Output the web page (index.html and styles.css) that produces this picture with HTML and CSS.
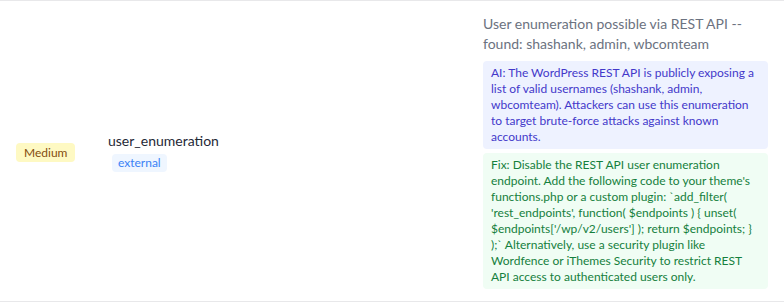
FILE: index.html
```html
<!DOCTYPE html>
<html lang="en">
<head>
<meta charset="utf-8">
<title>Finding</title>
<link rel="stylesheet" href="styles.css">
</head>
<body>
<div class="row">
  <div class="cell cell-severity">
    <span class="badge badge-medium">Medium</span>
  </div>
  <div class="cell cell-check">
    <div class="check-name">user_enumeration</div>
    <span class="tag">external</span>
  </div>
  <div class="cell cell-detail">
    <div class="detail-title">User enumeration possible via REST API -- found: shashank, admin, wbcomteam</div>
    <div class="note note-ai">AI: The WordPress REST API is publicly exposing a list of valid usernames (shashank, admin, wbcomteam). Attackers can use this enumeration to target brute-force attacks against known accounts.</div>
    <div class="note note-fix">Fix: Disable the REST API user enumeration endpoint. Add the following code to your theme's functions.php or a custom plugin: `add_filter( 'rest_endpoints', function( $endpoints ) { unset( $endpoints['/wp/v2/users'] ); return $endpoints; } );` Alternatively, use a security plugin like Wordfence or iThemes Security to restrict REST API access to authenticated users only.</div>
  </div>
</div>
</body>
</html>
```
FILE: styles.css
```css
html, body {
  margin: 0;
  padding: 0;
  background: #ffffff;
}
body {
  font-family: "Lato", "Noto Sans", sans-serif;
  color: #111827;
}
.row {
  display: grid;
  grid-template-columns: 92px 375px 1fr;
  align-items: center;
  height: 302px;
  box-sizing: border-box;
  border-top: 1px solid #e8e8ea;
  border-bottom: 1px solid #e8e8ea;
}
.cell {
  padding: 12px 16px;
}
.badge {
  display: inline-block;
  font-size: 12px;
  line-height: 16px;
  padding: 2px 8px 1px;
  border-radius: 4px;
}
.badge-medium {
  background: #fef9c3;
  color: #854d0e;
}
.check-name {
  font-size: 14px;
  line-height: 20px;
  color: #1f2937;
}
.tag {
  display: inline-block;
  margin: 1px 0 0 4px;
  padding: 1px 6px;
  font-size: 12px;
  line-height: 16px;
  background: #eff6ff;
  color: #3b82f6;
  border-radius: 4px;
}
.detail-title {
  font-size: 14px;
  line-height: 20px;
  color: #6b7280;
}
.note {
  font-size: 12px;
  line-height: 16px;
  padding: 4px 8px;
  border-radius: 4px;
}
.note-ai {
  margin-top: 7px;
  background: #eef2ff;
  color: #4338ca;
}
.note-fix {
  margin-top: 4px;
  background: #f0fdf4;
  color: #15803d;
}
```
